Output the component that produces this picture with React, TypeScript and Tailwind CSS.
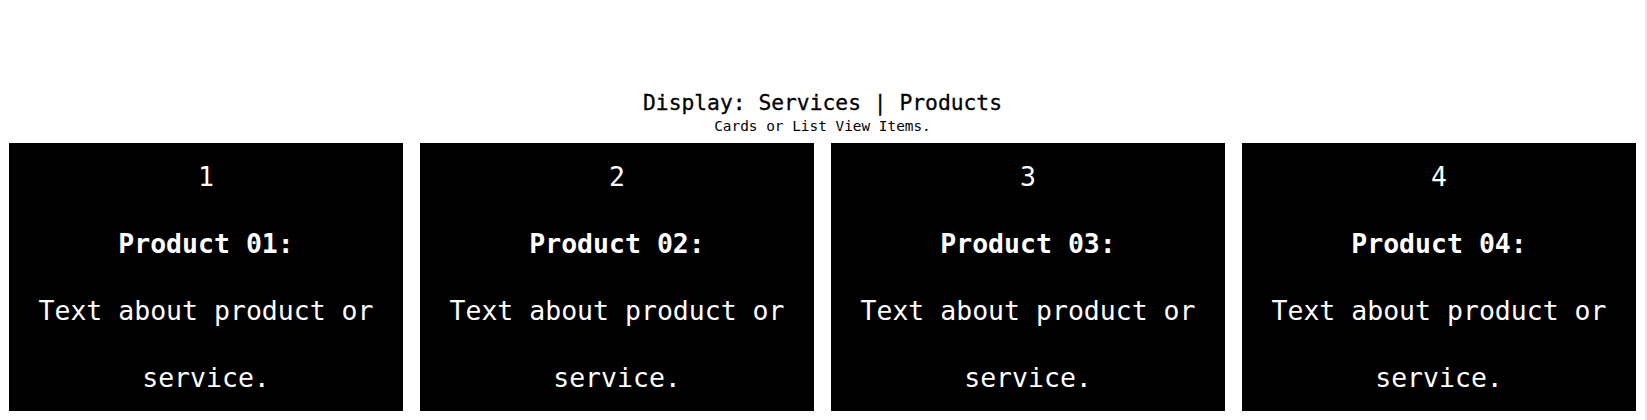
const products = [
  { id: 1, name: "Product 01:" },
  { id: 2, name: "Product 02:" },
  { id: 3, name: "Product 03:" },
  { id: 4, name: "Product 04:" },
]

function Card({ id, name }: { id: number; name: string }) {
  return (
    <div className="w-[394px] h-[268px] bg-black text-white text-center text-[26.5px] leading-[67px]">
      <p>{id}</p>
      <p className="font-bold">{name}</p>
      <p className="px-6">Text about product or service.</p>
    </div>
  )
}

export default function App() {
  return (
    <div className="flex bg-white min-h-[420px] font-['DejaVu_Sans_Mono','Liberation_Mono',monospace]">
      <div className="flex-1">
        <div className="pt-[89px] text-center text-black">
          <h2 className="text-[21.3px] leading-[27px] [-webkit-text-stroke:0.3px_black]">Display: Services | Products</h2>
          <p className="text-[14.4px] leading-[19px] pt-[1px]">Cards or List View Items.</p>
        </div>
        <div className="flex gap-[17px] px-[9px] pt-[7px]">
          {products.map((p) => (
            <Card key={p.id} id={p.id} name={p.name} />
          ))}
        </div>
      </div>
      <div className="w-[3px] bg-[#e6e6e6]" />
    </div>
  )
}
